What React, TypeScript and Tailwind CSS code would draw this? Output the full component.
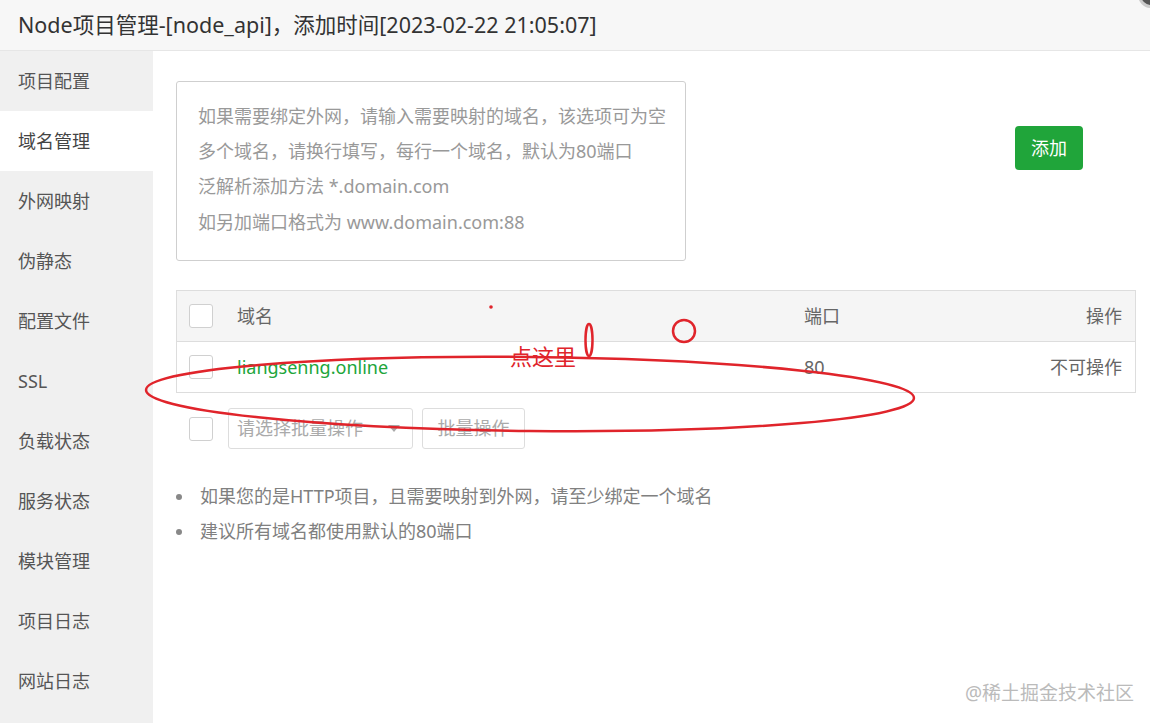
import React from "react";

const sideItems = ["项目配置", "域名管理", "外网映射", "伪静态", "配置文件", "SSL", "负载状态", "服务状态", "模块管理", "项目日志", "网站日志"];

function Checkbox() {
  return <div className="w-[24px] h-[24px] border border-[#d0d0d0] rounded-[3px] bg-white shrink-0" />;
}

export default function App() {
  return (
    <div
      className="relative w-[1150px] h-[723px] overflow-hidden bg-white text-[#555]"
      style={{ fontFamily: '"Noto Sans", "Noto Sans CJK SC", sans-serif' }}
    >
      <div className="h-[51px] bg-[#f7f7f7] border-b border-[#e6e6e6] flex items-center pl-[18px] text-[21.5px] text-[#333]">
        Node项目管理-[node_api]，添加时间[2023-02-22 21:05:07]
      </div>
      <div className="absolute right-[-14px] top-[-18px] w-[26px] h-[26px] rounded-full bg-[#555] border-[3px] border-[#ccc]" />
      <div className="flex h-[672px]">
        <div className="w-[153px] bg-[#f0f0f0] flex flex-col">
          {sideItems.map((t, i) => (
            <div
              key={t}
              className={
                i === 1
                  ? "h-[60px] shrink-0 flex items-center pl-[18px] text-[18px] bg-white text-[#444]"
                  : "h-[60px] shrink-0 flex items-center pl-[18px] text-[18px] text-[#555]"
              }
            >
              {t}
            </div>
          ))}
        </div>
        <div className="flex-1 pl-[23px] pr-[14px] pt-[30px]">
          <div className="flex items-start">
            <div className="w-[510px] h-[180px] border border-[#cfcfcf] rounded-[3px] pl-[21px] pt-[17px] text-[18px] text-[#999] leading-[35px]">
              <div>如果需要绑定外网，请输入需要映射的域名，该选项可为空</div>
              <div>多个域名，请换行填写，每行一个域名，默认为80端口</div>
              <div>泛解析添加方法 *.domain.com</div>
              <div className="mt-[1px]">如另加端口格式为 www.domain.com:88</div>
            </div>
            <div className="ml-[329px] mt-[45px] w-[68px] h-[44px] rounded-[4px] bg-[#20a53a] text-white text-[18px] flex items-center justify-center">
              添加
            </div>
          </div>
          <div className="mt-[29px] w-[960px] border border-[#ddd]">
            <div className="h-[51px] bg-[#f5f5f5] border-b border-[#ddd] flex items-center pl-[12px] pr-[13px] text-[18px] text-[#666]">
              <Checkbox />
              <div className="ml-[24px] w-[567px]">域名</div>
              <div className="flex-1">端口</div>
              <div>操作</div>
            </div>
            <div className="h-[50px] flex items-center pl-[12px] pr-[13px] text-[18px] text-[#666]">
              <Checkbox />
              <div className="ml-[24px] w-[567px] text-[#20a53a]">liangsenng.online</div>
              <div className="flex-1">80</div>
              <div>不可操作</div>
            </div>
          </div>
          <div className="mt-[15px] flex items-center pl-[13px] text-[18px] text-[#aaa]">
            <Checkbox />
            <div className="ml-[15px] w-[185px] h-[41px] border border-[#ddd] rounded-[3px] flex items-center pl-[8px] pr-[12px]">
              <span className="flex-1">请选择批量操作</span>
              <span className="w-0 h-0 border-l-[6px] border-r-[6px] border-t-[7px] border-l-transparent border-r-transparent border-t-[#aaa]" />
            </div>
            <div className="ml-[9px] w-[103px] h-[41px] border border-[#ddd] rounded-[3px] flex items-center justify-center">
              批量操作
            </div>
          </div>
          <ul className="mt-[30px] text-[18px] text-[#808080] leading-[35px]">
            <li className="flex items-center">
              <span className="w-[6px] h-[6px] rounded-full bg-[#888] mr-[18px]" />
              如果您的是HTTP项目，且需要映射到外网，请至少绑定一个域名
            </li>
            <li className="flex items-center">
              <span className="w-[6px] h-[6px] rounded-full bg-[#888] mr-[18px]" />
              建议所有域名都使用默认的80端口
            </li>
          </ul>
        </div>
      </div>
      <div className="absolute left-[965px] top-[679px] text-[19px] text-[#bbb]">@稀土掘金技术社区</div>
      <svg className="absolute left-0 top-0 pointer-events-none" width="1150" height="723">
        <g fill="none" stroke="#e0242b" strokeWidth="2.5">
          <ellipse cx="530" cy="394" rx="384" ry="37" transform="rotate(0.6 530 394)" />
          <circle cx="684" cy="331" r="11" />
          <ellipse cx="589" cy="340" rx="3.5" ry="16" />
        </g>
        <circle cx="491" cy="307" r="1.8" fill="#e0242b" />
      </svg>
      <div className="absolute left-[510px] top-[341px] text-[22px] text-[#e0242b] leading-[30px]">点这里</div>
    </div>
  );
}
